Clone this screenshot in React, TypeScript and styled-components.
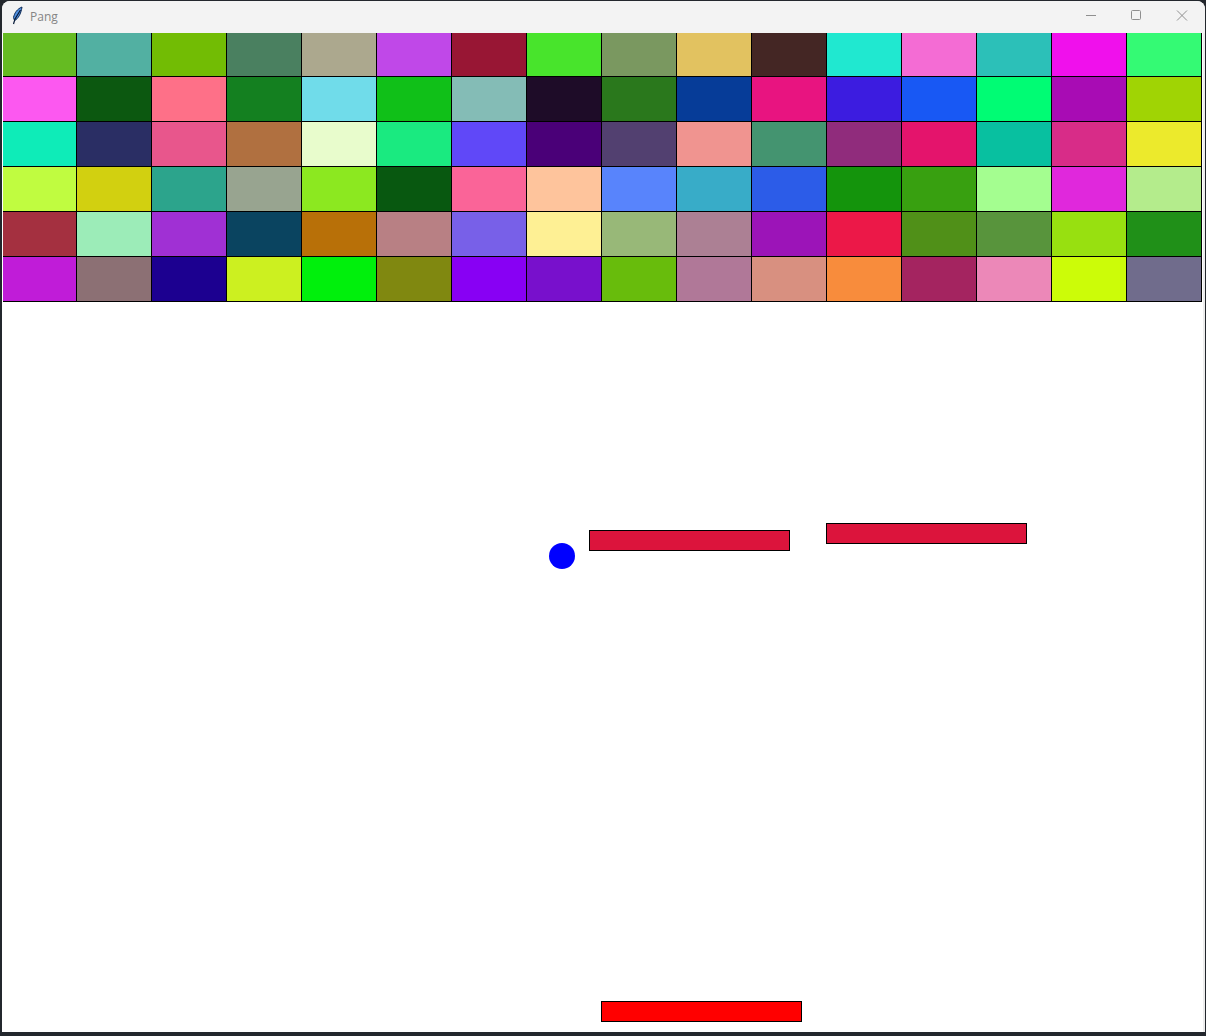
import React from "react";
import styled, { createGlobalStyle } from "styled-components";

const Global = createGlobalStyle`
  html, body { margin: 0; padding: 0; height: 100%; background: #262a30; overflow: hidden; }
  #root { height: 1036px; }
`;

const Desktop = styled.div`
  width: 1206px;
  height: 1036px;
  padding: 1px 1px 4px 2px;
  box-sizing: border-box;
  background: #23272d;
  display: flex;
`;

const Window = styled.div`
  flex: 1;
  display: flex;
  flex-direction: column;
  border-radius: 8px 8px 0 0;
  overflow: hidden;
  background: #fff;
`;

const TitleBar = styled.div`
  height: 32px;
  flex: none;
  display: flex;
  align-items: center;
  background: #f3f3f3;
`;

const AppIcon = styled.svg`
  width: 16px;
  height: 22px;
  margin: 0 5px 3px 7px;
  flex: none;
`;

const Title = styled.span`
  flex: 1;
  font: 12px "Open Sans", "Liberation Sans", sans-serif;
  color: #858585;
  padding-bottom: 1px;
`;

const Controls = styled.div`
  display: flex;
  height: 100%;
`;

const ControlButton = styled.div`
  width: 46px;
  height: 100%;
  display: flex;
  align-items: flex-start;
  justify-content: center;
  padding-top: 9px;
  box-sizing: border-box;
  color: #8f8f8f;
`;

const ControlIcon = styled.svg`
  width: 12px;
  height: 12px;
  display: block;
`;

const Canvas = styled.div`
  position: relative;
  flex: 1;
  background: #fff;
  border-right: 2px solid #ededed;
`;

const Wall = styled.div`
  display: grid;
  grid-template-columns: 74px repeat(15, 75px);
  grid-template-rows: 44px repeat(5, 45px);
  padding-left: 1px;
`;

const Brick = styled.div<{ $color: string }>`
  background: ${(p) => p.$color};
  border-right: 1px solid #000;
  border-bottom: 1px solid #000;
  box-sizing: border-box;
`;

const Ball = styled.div`
  position: absolute;
  left: 547px;
  top: 510px;
  width: 26px;
  height: 26px;
  border-radius: 50%;
  background: #0000ff;
`;

const Paddle = styled.div<{ $x: number; $y: number; $color: string }>`
  position: absolute;
  left: ${(p) => p.$x - 2}px;
  top: ${(p) => p.$y - 33}px;
  width: 201px;
  height: 21px;
  box-sizing: border-box;
  border: 1px solid #000;
  background: ${(p) => p.$color};
`;

const colors = [
  "#65bb22", "#52b0a2", "#72bc04", "#4a8060", "#aca88e", "#c048e8", "#981634", "#48e42c", "#7a9860", "#e2c260", "#442624", "#20e8d0", "#f46cd4", "#2cc0b8", "#f010ec", "#34fa74",
  "#fc58f0", "#0c5810", "#fe7088", "#148020", "#70dcea", "#10c018", "#84bcb6", "#1e0c28", "#2a781c", "#063c98", "#e81480", "#3c1ce0", "#1858f4", "#00fc74", "#a80cb4", "#a0d404",
  "#0eecb8", "#2a2e64", "#e8568c", "#b07040", "#e8fccc", "#1aea80", "#6048f8", "#4a0078", "#524070", "#f09490", "#449470", "#902c7c", "#e4146c", "#08c0a0", "#d82c88", "#ecea2c",
  "#c0fc40", "#d2d010", "#2ca48c", "#98a490", "#8ce820", "#085810", "#fa6498", "#fec49c", "#5884fc", "#38acc8", "#2c5ce8", "#14940c", "#38a010", "#a4fe90", "#e028dc", "#b4ec8c",
  "#a43040", "#9cecb8", "#a030d4", "#0a4460", "#b87008", "#b88084", "#7860e8", "#fef094", "#98b878", "#ac8094", "#9c14b8", "#ec1848", "#509018", "#58943c", "#98e010", "#209018",
  "#c01cd8", "#8c7074", "#1c0090", "#ccf020", "#00f00c", "#808810", "#8800f4", "#7810cc", "#68bc0c", "#b07898", "#d89080", "#f88c3c", "#a42460", "#ec88b8", "#ccfc08", "#706c8c",
];

export default function App() {
  return (
    <>
      <Global />
      <Desktop>
        <Window>
          <TitleBar>
            <AppIcon viewBox="0 0 16 22">
              <path d="M13 2C8 4 5.500 8 4.500 12.500L5.500 15.500C9 14 12 9 13 2Z" fill="#4f8fe0" stroke="#0d2a55" strokeWidth="1" />
              <path d="M11.500 5L6 14L4.500 19" fill="none" stroke="#071a38" strokeWidth="1.200" />
            </AppIcon>
            <Title>Pang</Title>
            <Controls>
              <ControlButton>
                <ControlIcon viewBox="0 0 12 12">
                  <path d="M2 5.500H12" stroke="currentColor" fill="none" />
                </ControlIcon>
              </ControlButton>
              <ControlButton>
                <ControlIcon viewBox="0 0 12 12">
                  <rect x="1.500" y="0.500" width="9" height="9" rx="1" stroke="currentColor" fill="none" />
                </ControlIcon>
              </ControlButton>
              <ControlButton>
                <ControlIcon viewBox="0 0 12 12">
                  <path d="M1 0.500L11 10.500M11 0.500L1 10.500" stroke="currentColor" fill="none" />
                </ControlIcon>
              </ControlButton>
            </Controls>
          </TitleBar>
          <Canvas>
            <Wall>
              {colors.map((c, i) => (
                <Brick key={i} $color={c} />
              ))}
            </Wall>
            <Ball />
            <Paddle $x={589} $y={530} $color="#dc143c" />
            <Paddle $x={826} $y={523} $color="#dc143c" />
            <Paddle $x={601} $y={1001} $color="#ff0000" />
          </Canvas>
        </Window>
      </Desktop>
    </>
  );
}
